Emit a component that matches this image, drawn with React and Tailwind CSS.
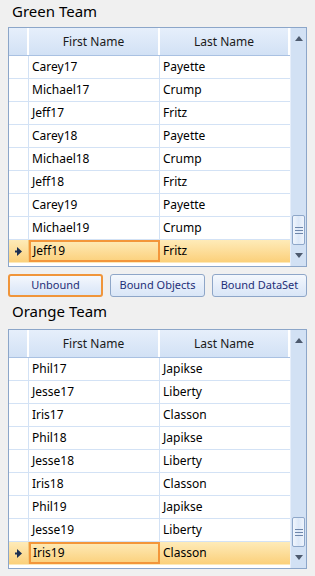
import React from "react";

const green = [
  ["Carey17", "Payette"],
  ["Michael17", "Crump"],
  ["Jeff17", "Fritz"],
  ["Carey18", "Payette"],
  ["Michael18", "Crump"],
  ["Jeff18", "Fritz"],
  ["Carey19", "Payette"],
  ["Michael19", "Crump"],
  ["Jeff19", "Fritz"],
];

const orange = [
  ["Phil17", "Japikse"],
  ["Jesse17", "Liberty"],
  ["Iris17", "Classon"],
  ["Phil18", "Japikse"],
  ["Jesse18", "Liberty"],
  ["Iris18", "Classon"],
  ["Phil19", "Japikse"],
  ["Jesse19", "Liberty"],
  ["Iris19", "Classon"],
];

function RowArrow() {
  return (
    <svg width="7" height="9" viewBox="0 0 7 9">
      <path d="M2 0 L7 4.5 L2 9 Z" fill="#1b2f52" />
      <rect x="0" y="3.5" width="3" height="2" fill="#1b2f52" />
    </svg>
  );
}

function ScrollBar() {
  return (
    <div className="w-[17px] flex flex-col bg-[#d2e1f4] border-l border-[#e6eefa]">
      <div className="h-[20px] flex items-center justify-center">
        <svg width="8" height="5" viewBox="0 0 8 5">
          <path d="M0 5 L4 0 L8 5 Z" fill="#4d5a6e" />
        </svg>
      </div>
      <div className="flex-1 flex flex-col justify-end">
        <div className="h-[30px] mx-px rounded-[2px] border border-[#8ea7c9] bg-gradient-to-r from-[#f1f6fd] via-[#dce8f8] to-[#eef4fc] flex flex-col items-center justify-center gap-[2px]">
          <div className="w-[8px] h-px bg-[#6e86aa]" />
          <div className="w-[8px] h-px bg-[#6e86aa]" />
          <div className="w-[8px] h-px bg-[#6e86aa]" />
        </div>
      </div>
      <div className="h-[21px] flex items-center justify-center">
        <svg width="8" height="5" viewBox="0 0 8 5">
          <path d="M0 0 L4 5 L8 0 Z" fill="#4d5a6e" />
        </svg>
      </div>
    </div>
  );
}

function Grid({ rows }) {
  const last = rows.length - 1;
  return (
    <div className="h-[240px] border border-[#8ca6c9] flex bg-white">
      <div className="w-[281px] flex flex-col">
        <div className="h-[28px] flex border-b border-[#a9c1e2] text-[12px] text-[#1a1a1a]">
          <div className="w-[20px] bg-gradient-to-b from-[#e6effb] to-[#d2e1f5] border-r-2 border-white" />
          <div className="w-[131px] bg-gradient-to-b from-[#e6effb] to-[#d2e1f5] border-r-2 border-white flex items-center justify-center">
            First Name
          </div>
          <div className="w-[130px] bg-gradient-to-b from-[#e6effb] to-[#d2e1f5] border-r-2 border-white flex items-center justify-center">
            Last Name
          </div>
        </div>
        {rows.map(([first, lastName], i) =>
          i === last ? (
            <div key={i} className="h-[23px] flex text-[12px] text-black bg-gradient-to-b from-[#feebb8] to-[#fbd07a] border-b border-[#fde9b9]">
              <div className="w-[20px] border-r border-[#f3c87a] flex items-center justify-center">
                <RowArrow />
              </div>
              <div className="w-[131px] border-2 border-[#f3963a] flex items-center pl-[2px]">
                {first}
              </div>
              <div className="w-[130px] flex items-center pl-[3px]">{lastName}</div>
            </div>
          ) : (
            <div key={i} className="h-[23px] flex text-[12px] text-black border-b border-[#d3e2f5]">
              <div className="w-[20px] border-r border-[#d3e2f5]" />
              <div className="w-[131px] border-r border-[#d3e2f5] flex items-center pl-[3px]">
                {first}
              </div>
              <div className="w-[130px] flex items-center pl-[3px]">{lastName}</div>
            </div>
          )
        )}
        <div className="flex-1 bg-white" />
      </div>
      <ScrollBar />
    </div>
  );
}

function Btn({ label, active }) {
  return (
    <button
      className={`w-[95px] h-[23px] rounded-[3px] text-[11px] text-[#1e2f78] bg-gradient-to-b from-[#f4f8fd] via-[#e6eefa] to-[#d9e6f7] ${
        active ? "border-2 border-[#f0953a]" : "border border-[#8ea6c8]"
      }`}
    >
      {label}
    </button>
  );
}

export default function App() {
  return (
    <div
      className="w-[315px] h-[576px] bg-[#f0f0f0] px-2"
      style={{ fontFamily: '"Noto Sans", "Open Sans", sans-serif' }}
    >
      <div className="h-[27px] pl-1 text-[15px] leading-[22px] text-black">Green Team</div>
      <Grid rows={green} />
      <div className="flex gap-[7px] mt-[7px]">
        <Btn label="Unbound" active />
        <Btn label="Bound Objects" />
        <Btn label="Bound DataSet" />
      </div>
      <div className="h-[32px] pl-1 text-[15px] leading-[28px] text-black">Orange Team</div>
      <Grid rows={orange} />
    </div>
  );
}
